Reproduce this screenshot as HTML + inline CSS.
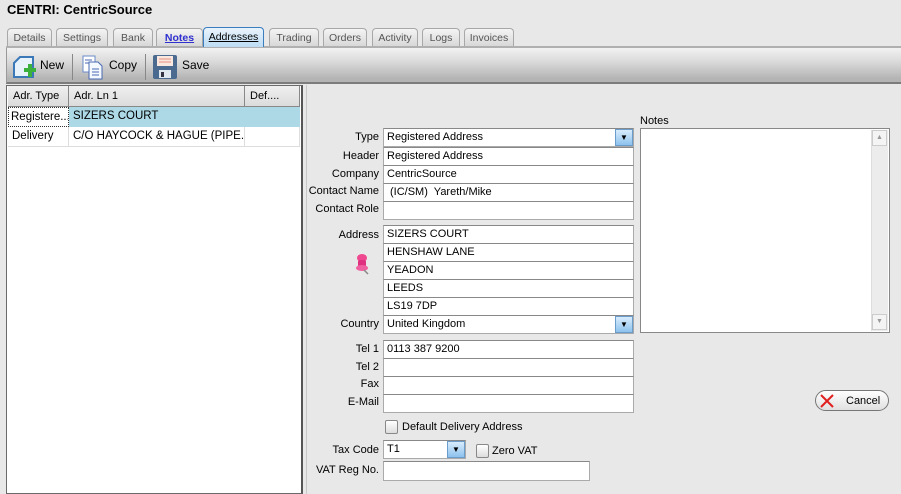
<!DOCTYPE html>
<html><head><meta charset="utf-8"><style>
*{box-sizing:border-box;margin:0;padding:0}
body{width:901px;height:494px;background:#e8e8e8;font-family:"Liberation Sans",sans-serif;font-size:11px;color:#000;position:relative;overflow:hidden}
.a{position:absolute;white-space:nowrap}
.title{left:7px;top:2px;font-weight:bold;font-size:13px}
.tab{position:absolute;top:28px;height:18px;border:1px solid #a8a8a8;border-bottom:none;border-radius:4px 4px 0 0;background:linear-gradient(#f4f4f4,#d8d8d8);color:#555;text-align:center;line-height:18px;font-size:10.5px;white-space:nowrap;overflow:hidden}
.tab.sel{top:27px;height:20px;background:linear-gradient(#eaf4fc,#bcdcf4);border-color:#3a7ebf;color:#000;text-decoration:underline;line-height:19px}
.tb{left:6px;top:48px;width:895px;height:36px;background:linear-gradient(#f2f2f2 0%,#dadada 40%,#b4b4b4 90%);border-bottom:2px solid #7c7c7c;border-left:1px solid #999}
.sep{position:absolute;top:54px;width:1px;height:26px;background:#888}
.lp{left:6px;top:85px;width:297px;height:409px;background:#fff;border:1px solid #6a6a6a;border-right:2px solid #555}
.hd{position:absolute;top:86px;height:21px;background:linear-gradient(#f0f0f0,#dcdcdc);border-right:1px solid #888;border-bottom:1px solid #888;line-height:20px;padding-left:5px;white-space:nowrap;overflow:hidden}
.cell{position:absolute;height:20px;line-height:19px;padding-left:4px;border-right:1px solid #ddd;border-bottom:1px solid #ddd;font-size:11.5px;white-space:nowrap;overflow:hidden}
.f{position:absolute;left:383px;width:251px;height:19px;background:#fff;border:1px solid #aaa;border-top-color:#888;line-height:17px;padding-left:3px;font-size:11px;white-space:nowrap}
.l{position:absolute;text-align:right;width:100px;left:279px;font-size:11px;white-space:nowrap}
.dd{position:absolute;width:18px;height:17px;top:0;right:0;background:linear-gradient(#d8ecfc,#8ec2ee);border:1px solid #6a9ccc;font-size:8px;text-align:center;line-height:15px}
.cb{position:absolute;width:13px;height:14px;border:1px solid #888;border-radius:2px;background:linear-gradient(#fff,#ddd)}
</style></head><body>
<div class="a title">CENTRI: CentricSource</div>
<div class="a" style="left:6px;top:46px;width:895px;height:2px;background:#b0b0b0"></div>
<div class="tab" style="left:7px;width:45px">Details</div>
<div class="tab" style="left:56px;width:52px">Settings</div>
<div class="tab" style="left:113px;width:40px">Bank</div>
<div class="tab" style="left:156px;width:47px;color:#3030d0;font-weight:bold;text-decoration:underline">Notes</div>
<div class="tab sel" style="left:203px;width:61px">Addresses</div>
<div class="tab" style="left:269px;width:50px">Trading</div>
<div class="tab" style="left:323px;width:44px">Orders</div>
<div class="tab" style="left:372px;width:46px">Activity</div>
<div class="tab" style="left:422px;width:38px">Logs</div>
<div class="tab" style="left:464px;width:50px">Invoices</div>
<div class="a tb"></div>
<svg class="a" style="left:11px;top:53px" width="28" height="28" viewBox="0 0 28 28"><path d="M3 10 L9 4 H22 V24 H3 Z" fill="#e8f2fa" stroke="#3a78b8" stroke-width="2"/><rect x="13" y="15" width="12" height="4" fill="#3cb03c"/><rect x="17" y="11" width="4" height="13" fill="#3cb03c"/></svg>
<div class="a" style="left:40px;top:58px;font-size:12px">New</div>
<div class="sep" style="left:72px"></div>
<svg class="a" style="left:80px;top:53px" width="26" height="28" viewBox="0 0 26 28"><rect x="3" y="3" width="12" height="16" fill="#fff" stroke="#6a8ac8"/><path d="M9 9 H18 L22 13 V26 H9 Z" fill="#f4f8ff" stroke="#4a6ab0"/><path d="M12 16h7M12 19h7M12 22h7M5 7h7M5 10h4" stroke="#4a6ab0"/></svg>
<div class="a" style="left:109px;top:58px;font-size:12px">Copy</div>
<div class="sep" style="left:145px"></div>
<svg class="a" style="left:152px;top:54px" width="26" height="26" viewBox="0 0 26 26"><rect x="1" y="1" width="24" height="24" rx="2" fill="#4a6a90"/><rect x="5" y="2" width="16" height="10" fill="#f8e8e0"/><path d="M7 5h12M7 8h12" stroke="#e89080"/><rect x="7" y="16" width="12" height="8" fill="#e0e8f0"/><rect x="9" y="18" width="3" height="5" fill="#334"/></svg>
<div class="a" style="left:182px;top:58px;font-size:12px">Save</div>

<div class="a lp"></div>
<div class="hd" style="left:8px;width:61px">Adr. Type</div>
<div class="hd" style="left:69px;width:176px">Adr. Ln 1</div>
<div class="hd" style="left:245px;width:55px">Def....</div>
<div class="cell" style="left:8px;top:107px;width:61px;border:1px dotted #333;padding-left:2px">Registere...</div>
<div class="cell" style="left:69px;top:107px;width:231px;background:#add8e6;border-color:#add8e6">SIZERS COURT</div>
<div class="cell" style="left:8px;top:127px;width:61px">Delivery</div>
<div class="cell" style="left:69px;top:127px;width:176px">C/O HAYCOCK &amp; HAGUE (PIPE...</div>
<div class="cell" style="left:245px;top:127px;width:55px"></div>
<div class="a" style="left:306px;top:85px;width:1px;height:409px;background:#fafafa;border-left:1px solid #c8c8c8"></div>

<div class="l" style="top:131px">Type</div><div class="f" style="top:128px">Registered Address<div class="dd">▼</div></div>
<div class="l" style="top:150px">Header</div><div class="f" style="top:147px">Registered Address</div>
<div class="l" style="top:168px">Company</div><div class="f" style="top:165px">CentricSource</div>
<div class="l" style="top:185px">Contact Name</div><div class="f" style="top:183px;padding-left:6px">(IC/SM)&nbsp; Yareth/Mike</div>
<div class="l" style="top:203px">Contact Role</div><div class="f" style="top:201px"></div>
<div class="l" style="top:229px">Address</div>
<div class="f" style="top:225px">SIZERS COURT</div>
<div class="f" style="top:243px">HENSHAW LANE</div>
<div class="f" style="top:261px">YEADON</div>
<div class="f" style="top:279px">LEEDS</div>
<div class="f" style="top:297px">LS19 7DP</div>
<svg class="a" style="left:352px;top:252px" width="20" height="24" viewBox="0 0 20 24"><ellipse cx="10" cy="6" rx="5" ry="4" fill="#f04890"/><rect x="6" y="8" width="8" height="7" rx="2" fill="#e03080"/><ellipse cx="10" cy="16" rx="6" ry="3" fill="#f060a0"/><path d="M12 18 L16 22" stroke="#888" stroke-width="1.5"/></svg>
<div class="l" style="top:318px">Country</div><div class="f" style="top:315px">United Kingdom<div class="dd">▼</div></div>
<div class="l" style="top:343px">Tel 1</div><div class="f" style="top:340px">0113 387 9200</div>
<div class="l" style="top:361px">Tel 2</div><div class="f" style="top:358px"></div>
<div class="l" style="top:378px">Fax</div><div class="f" style="top:376px"></div>
<div class="l" style="top:396px">E-Mail</div><div class="f" style="top:394px"></div>
<div class="cb" style="left:385px;top:420px"></div><div class="a" style="left:402px;top:421px">Default Delivery Address</div>
<div class="l" style="top:444px">Tax Code</div><div class="f" style="top:440px;width:83px">T1<div class="dd">▼</div></div>
<div class="cb" style="left:476px;top:444px"></div><div class="a" style="left:492px;top:445px">Zero VAT</div>
<div class="l" style="top:464px">VAT Reg No.</div><div class="f" style="top:461px;width:207px;height:20px"></div>

<div class="a" style="left:640px;top:115px">Notes</div>
<div class="a" style="left:640px;top:128px;width:250px;height:205px;background:#fff;border:1px solid #888"></div>
<div class="a" style="left:871px;top:130px;width:17px;height:201px;background:#ececec;border-left:1px solid #ddd"></div>
<div class="a" style="left:872px;top:130px;width:15px;height:16px;background:#f4f4f4;border:1px solid #ccc;font-size:7px;color:#999;text-align:center;line-height:14px">▲</div>
<div class="a" style="left:872px;top:314px;width:15px;height:16px;background:#f4f4f4;border:1px solid #ccc;font-size:7px;color:#999;text-align:center;line-height:14px">▼</div>
<div class="a" style="left:815px;top:390px;width:74px;height:21px;border:1px solid #777;border-radius:11px;background:linear-gradient(#fff,#e0e0e0)"></div>
<svg class="a" style="left:819px;top:393px" width="16" height="16" viewBox="0 0 16 16"><path d="M2 2L14 14M14 2L2 14" stroke="#e02020" stroke-width="2"/></svg>
<div class="a" style="left:846px;top:395px">Cancel</div>
</body></html>
